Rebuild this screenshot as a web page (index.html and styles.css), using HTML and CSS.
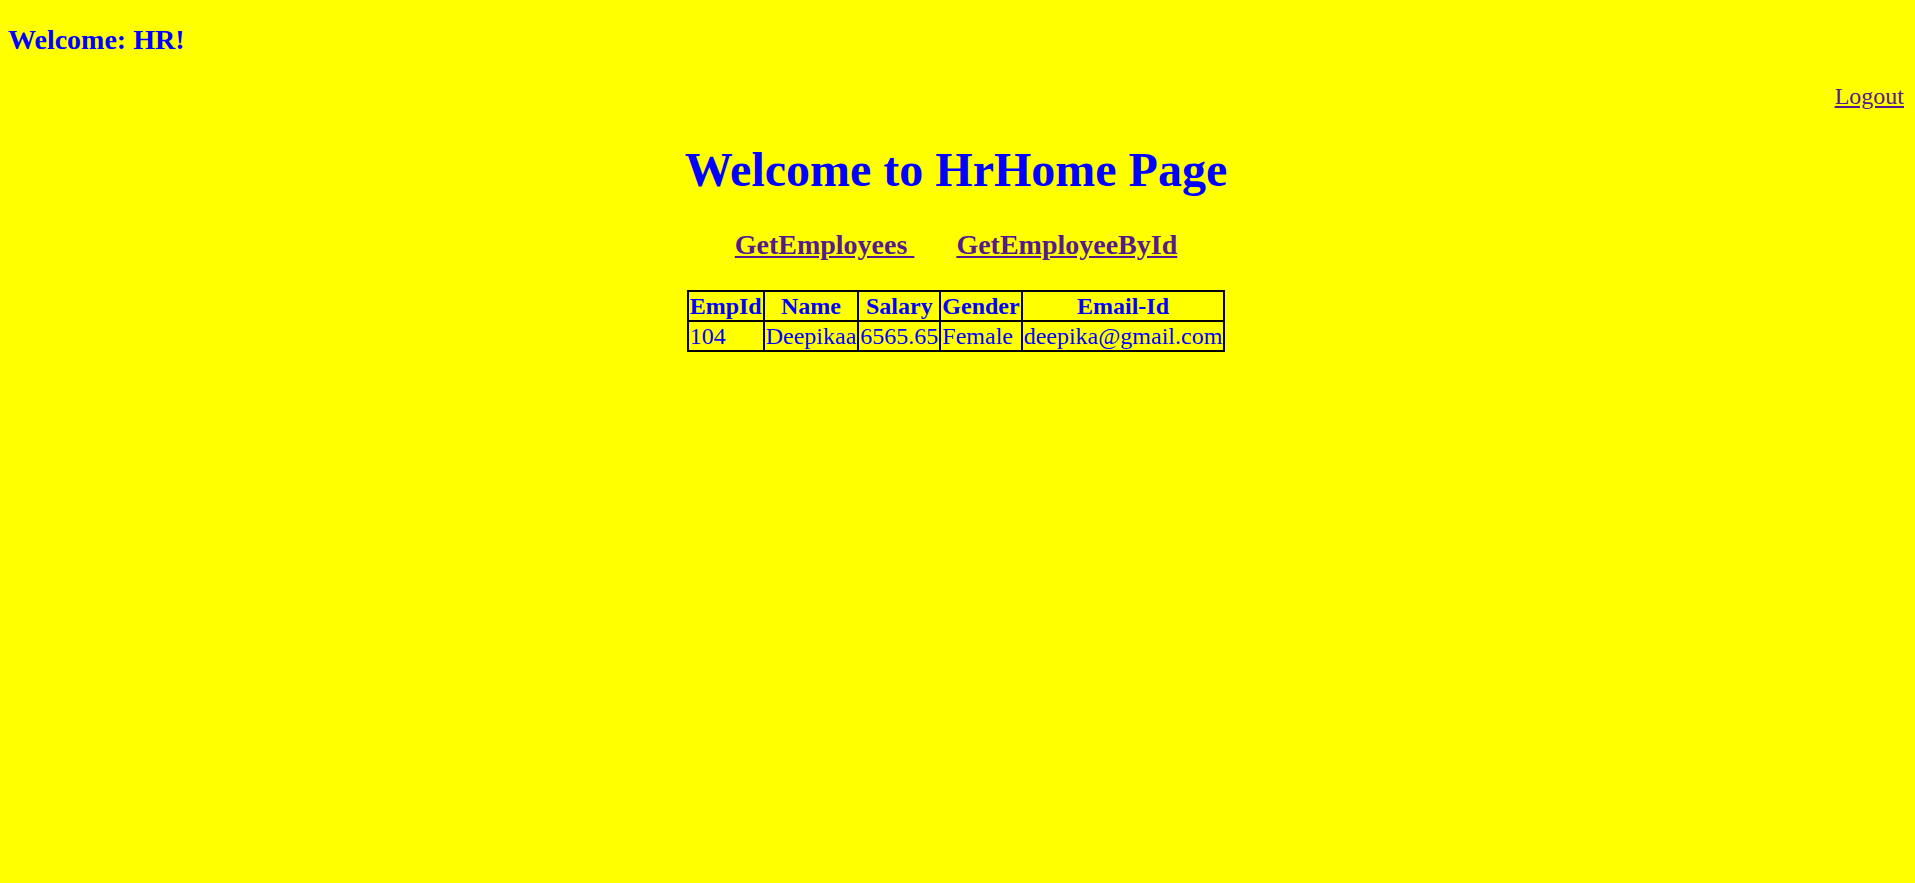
FILE: index.html
```html
<!DOCTYPE html>
<html>
<head>
<meta charset="utf-8">
<title>HrHome</title>
<link rel="stylesheet" href="styles.css">
</head>
<body class="page">
<h3 class="welcome">Welcome: HR!</h3>
<div class="logout-row"><a class="link" href="#">Logout</a></div>
<div class="main">
  <h1 class="title">Welcome to HrHome Page</h1>
  <h3 class="nav"><a class="link" href="#">GetEmployees </a>&nbsp;&nbsp;&nbsp;&nbsp;&nbsp;&nbsp;<a class="link" href="#">GetEmployeeById</a></h3>
  <table class="emp-table">
    <tr>
      <th>EmpId</th>
      <th>Name</th>
      <th>Salary</th>
      <th>Gender</th>
      <th>Email-Id</th>
    </tr>
    <tr>
      <td>104</td>
      <td>Deepikaa</td>
      <td>6565.65</td>
      <td>Female</td>
      <td>deepika@gmail.com</td>
    </tr>
  </table>
</div>
</body>
</html>
```
FILE: styles.css
```css
html {
  background: #ffff00;
}
.page {
  margin: 0;
  padding: 0 11px 0 8px;
  background: #ffff00;
  color: #0000ff;
  font-family: "Liberation Serif", "Times New Roman", serif;
  font-size: 24px;
  min-height: 883px;
  box-sizing: border-box;
}
.welcome {
  margin: 24px 0 0;
  font-size: 28px;
  line-height: 32px;
  font-weight: bold;
}
.logout-row {
  margin-top: 26px;
  text-align: right;
  font-size: 24px;
  line-height: 28px;
}
.link {
  color: #551a8b;
  text-decoration: underline;
}
.main {
  text-align: center;
}
.title {
  margin: 32px 0 0;
  font-size: 48px;
  line-height: 55px;
  font-weight: bold;
}
.nav {
  margin: 32px 0 0;
  font-size: 28px;
  line-height: 32px;
  font-weight: bold;
  white-space: pre;
}
.emp-table {
  margin: 29px auto 0;
  border-collapse: collapse;
  border: 2px solid #000;
  font-size: 24px;
  line-height: 28px;
  color: #0000ff;
}
.emp-table th,
.emp-table td {
  border: 2px solid #000;
  padding: 0 1px;
}
.emp-table th {
  font-weight: bold;
  text-align: center;
}
.emp-table td {
  text-align: left;
}
```
